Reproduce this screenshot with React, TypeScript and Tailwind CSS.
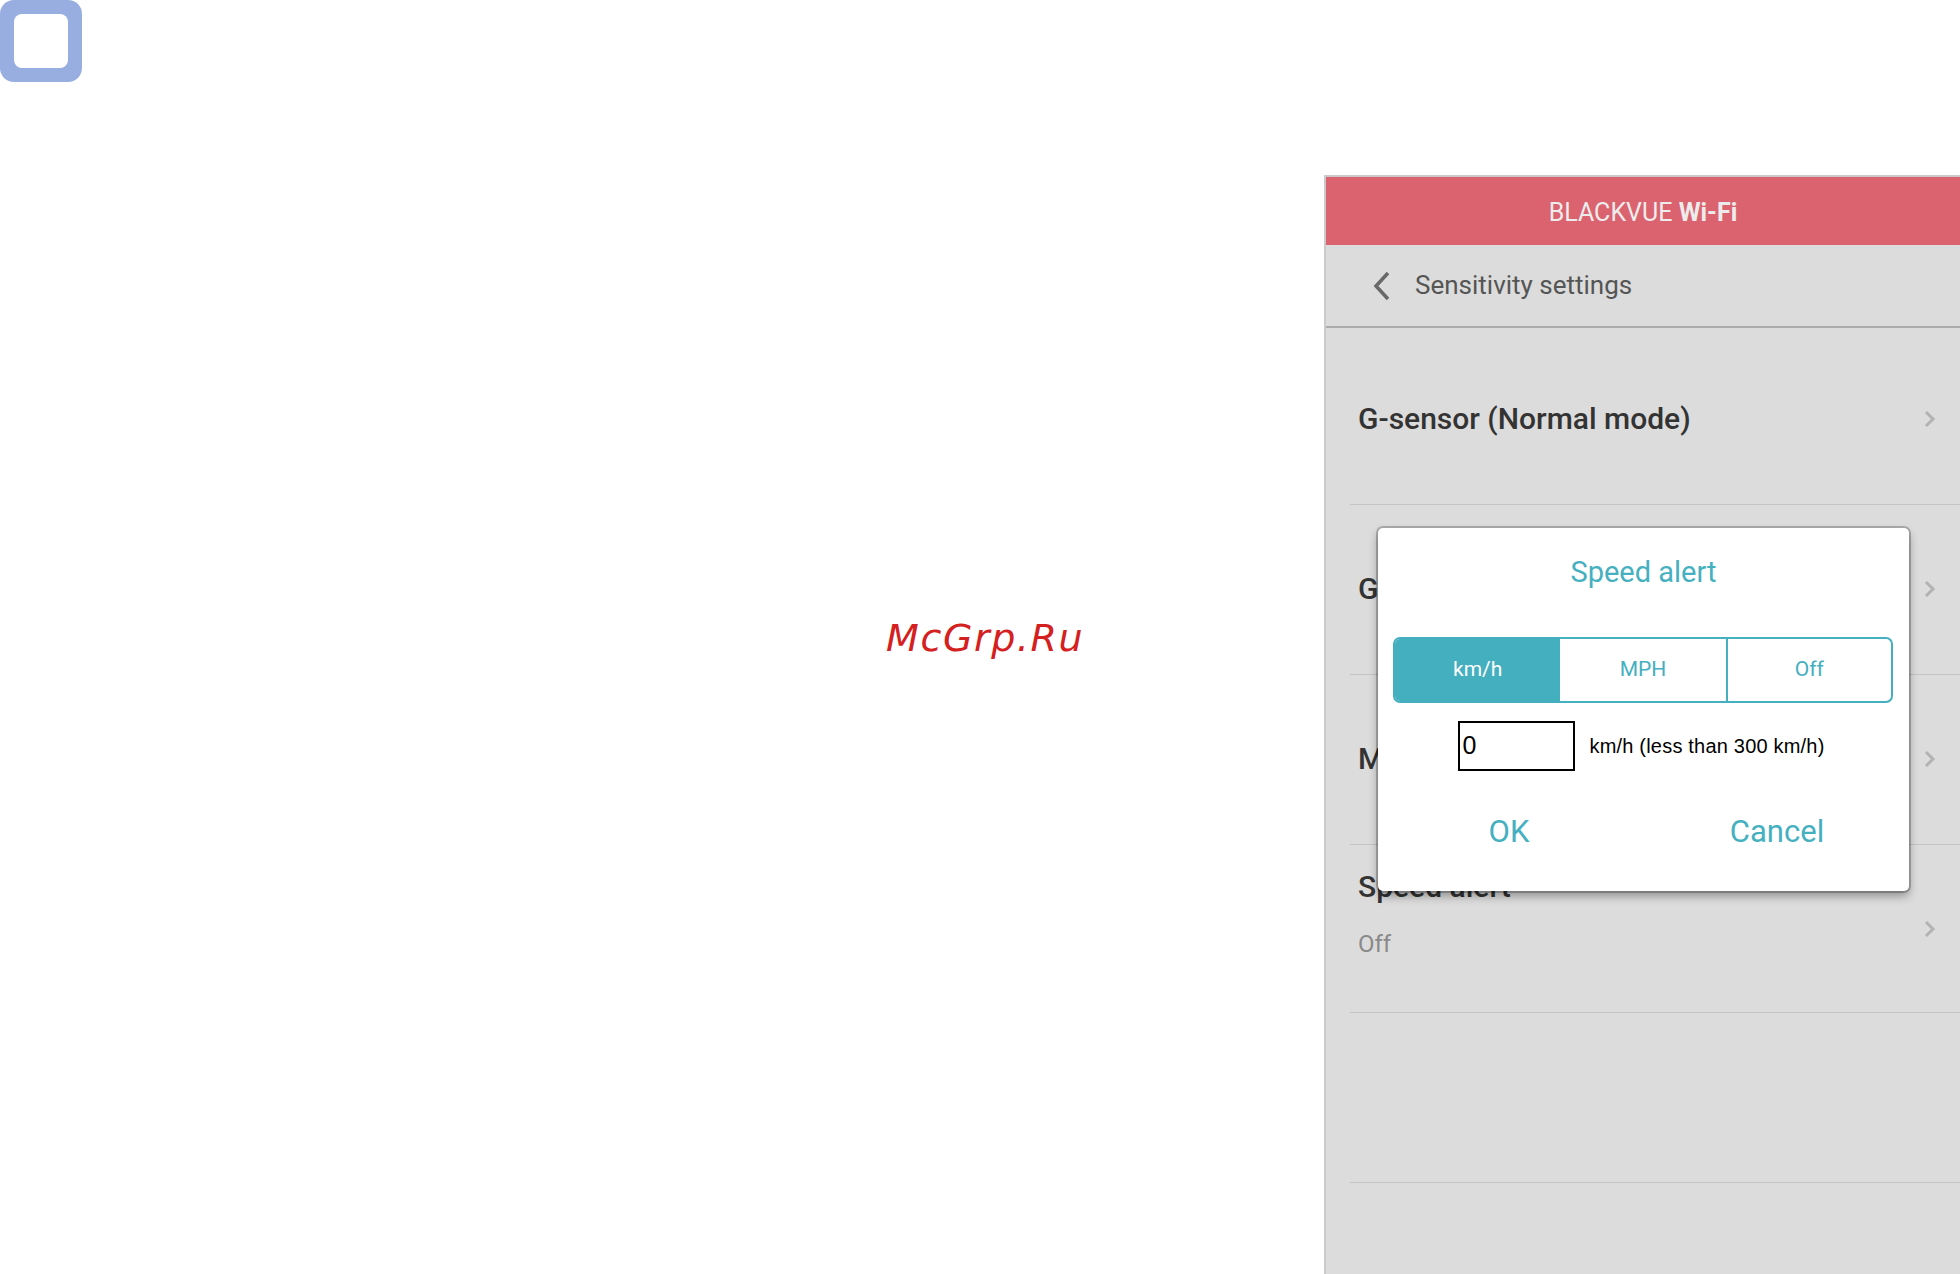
import React from 'react';

const Chevron: React.FC = () => (
  <svg width="12" height="18" viewBox="0 0 12 18" className="shrink-0">
    <polyline points="2,2 9,9 2,16" fill="none" stroke="#b3b3b3" strokeWidth="3" />
  </svg>
);

const Row: React.FC<{ title: string; h: string; pt?: string; arrow?: boolean }> = ({ title, h, pt = 'pt-0', arrow = true }) => (
  <div className={`flex flex-col ${h}`}>
    <div className={`flex flex-1 items-center justify-between pl-[32px] pr-[24px] ${pt}`}>
      <span className="text-[30px] font-medium text-[#333333] leading-none">{title}</span>
      {arrow && <Chevron />}
    </div>
    <div className="ml-[24px] h-px bg-[#c4c4c4]" />
  </div>
);

const SpeedDialog: React.FC = () => (
  <div className="absolute left-[52px] top-[351px] w-[531px] h-[363px] rounded-[5px] bg-white shadow-[0_0_0_2px_rgba(0,0,0,0.22),0_5px_10px_rgba(0,0,0,0.35)] flex flex-col px-[15px]">
    <div className="h-[90px] flex items-center justify-center text-[29px] text-[#45b0c0]">Speed alert</div>
    <div className="mt-[19px] grid grid-cols-3 h-[66px] w-[500px] rounded-[7px] border-2 border-[#44afbf] overflow-hidden text-[21px]">
      <div className="flex items-center justify-center bg-[#44afbf] text-white">km/h</div>
      <div className="flex items-center justify-center text-[#44afbf]">MPH</div>
      <div className="flex items-center justify-center border-l-2 border-[#44afbf] text-[#44afbf]">Off</div>
    </div>
    <div className="mt-[18px] flex items-center justify-center gap-[14px] pr-[4px]">
      <div className="w-[117px] h-[50px] border-2 border-black flex items-center pl-[2px] text-[25px] text-black font-['Liberation_Sans',sans-serif]">0</div>
      <span className="text-[20px] tracking-[0.2px] text-black font-['Liberation_Sans',sans-serif]">km/h (less than 300 km/h)</span>
    </div>
    <div className="relative mt-[45px] h-[40px] text-[31px] text-[#45b0c0] leading-none">
      <span className="absolute left-[116px] -translate-x-1/2">OK</span>
      <span className="absolute left-[384px] -translate-x-1/2">Cancel</span>
    </div>
  </div>
);

export default function App() {
  return (
    <div className="w-[1960px] h-[1274px] bg-white overflow-hidden flex flex-col font-['Roboto',sans-serif]">
      <div className="h-[175px] shrink-0">
        <div className="w-[82px] h-[82px] rounded-[14px] bg-[#98aee0] p-[14px]">
          <div className="w-full h-full rounded-[8px] bg-white" />
        </div>
      </div>
      <div className="flex flex-1">
        <div className="flex-1">
          <div className="ml-[886px] mt-[444px] text-[38px] italic tracking-[1.6px] text-[#d42020] font-['DejaVu_Sans',sans-serif] leading-none">
            McGrp.Ru
          </div>
        </div>
        <div className="relative w-[636px] h-full bg-[#dcdcdc] border-l-2 border-t-2 border-[#cacaca] flex flex-col">
          <div className="h-[68px] shrink-0 bg-[#db6370] flex items-center justify-center pt-[4px] text-[25px] text-[#ececec]">
            <span>BLACKVUE <span className="font-bold">Wi-Fi</span></span>
          </div>
          <div className="h-[83px] shrink-0 flex items-center border-b-2 border-[#ababab] pl-[46px]">
            <svg width="20" height="30" viewBox="0 0 20 30">
              <polyline points="16,2 4,15 16,28" fill="none" stroke="#686868" strokeWidth="3.5" />
            </svg>
            <span className="ml-[23px] text-[26px] text-[#555555]">Sensitivity settings</span>
          </div>
          <Row title="G-sensor (Normal mode)" h="h-[177px]" pt="pt-[6px]" />
          <Row title="G-sensor (Parking mode)" h="h-[170px]" pt="pb-[1px]" />
          <Row title="Motion detection (Parking mode)" h="h-[170px]" pt="pb-[1px]" />
          <div className="flex flex-col h-[168px]">
            <div className="relative flex-1 pl-[32px] pr-[24px] pt-[27px]">
              <div className="text-[30px] font-medium text-[#333333] leading-none">Speed alert</div>
              <div className="mt-[30px] text-[24px] text-[#8a8a8a] leading-none">Off</div>
              <div className="absolute right-[24px] top-[75px]">
                <Chevron />
              </div>
            </div>
            <div className="ml-[24px] h-px bg-[#c4c4c4]" />
          </div>
          <Row title="" h="h-[170px]" arrow={false} />
          <SpeedDialog />
        </div>
      </div>
    </div>
  );
}
